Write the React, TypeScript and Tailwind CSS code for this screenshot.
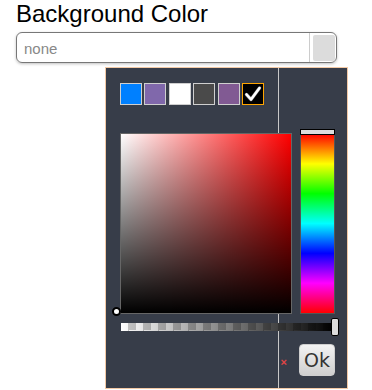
import React from 'react'

const swatches = [
  { color: 'bg-[#0080ff]' },
  { color: 'bg-[#8068ab]' },
  { color: 'bg-white' },
  { color: 'bg-[#4a4a4a]' },
  { color: 'bg-[#815a93]' },
]

function Palette() {
  return (
    <div className="flex gap-[2px] pl-[14px] pt-[15px] h-[65px]">
      {swatches.map((s, i) => (
        <div key={i} className={`w-[22px] h-[22px] border border-[#cfcfcf] ${s.color} ${i > 1 ? 'ml-[0.5px]' : ''}`} />
      ))}
      <div className="w-[22px] h-[22px] border border-[#ffa500] bg-black flex items-center justify-center">
        <svg width="18" height="18" viewBox="0 0 18 18">
          <path d="M2.5 9.5 L7 14.5 L15.5 3" fill="none" stroke="#ddd" strokeWidth="3.5" strokeLinecap="round" strokeLinejoin="round" opacity="0.5" />
          <path d="M2.5 9.5 L7 14.5 L15.5 3" fill="none" stroke="#fff" strokeWidth="2.6" strokeLinecap="round" strokeLinejoin="round" />
        </svg>
      </div>
    </div>
  )
}

function Picker() {
  return (
    <div className="pl-[14px]">
      <div className="flex gap-[8px]">
        <div className="relative w-[172px] h-[181px] border border-[#666] bg-[#f00] bg-[image:linear-gradient(to_top,#000,rgba(0,0,0,0)),linear-gradient(to_right,#fff,rgba(255,255,255,0))]">
          <div className="absolute left-[-9px] bottom-[-3px] w-[9px] h-[9px] rounded-full border-2 border-black bg-white" />
        </div>
        <div className="relative w-[35px] h-[181px] border border-[#555] bg-[image:linear-gradient(to_bottom,#f00,#ff0,#0f0,#0ff,#00f,#f0f,#f00)]">
          <div className="absolute left-[-1px] right-[-1px] top-[-5px] h-[6px] border border-black bg-[#dcdcdc]" />
        </div>
      </div>
      <div className="relative mt-[9px] ml-[1px] w-[212px] h-[8px] bg-[image:linear-gradient(to_right,rgba(0,0,0,0),#000),repeating-conic-gradient(#c8c8c8_0_25%,#fff_0_50%)] bg-[length:100%_100%,15px_15px]">
        <div className="absolute right-[-6px] top-[-5px] w-[8px] h-[18px] rounded-[2px] border border-black bg-[#dcdcdc]" />
      </div>
      <div className="flex items-center justify-end gap-[12px] mt-[13px] w-[215px]">
        <span className="text-[#e04545] text-[11px] font-bold leading-none pt-[4px]">×</span>
        <button className="w-[36px] h-[32px] rounded-[4px] border border-[#cfcfcf] bg-[image:linear-gradient(to_bottom,#f3f3f3,#cfcfcf)] text-[#333] text-[19px] leading-none font-['DejaVu_Sans',sans-serif]">
          Ok
        </button>
      </div>
    </div>
  )
}

export default function App() {
  return (
    <div className="w-[372px] h-[390px] overflow-hidden bg-white pl-[16px] font-['Liberation_Sans',Arial,sans-serif]">
      <div className="text-[24px] leading-[28px] text-black">Background Color</div>
      <div className="mt-[4px] w-[321px] h-[31px] rounded-[6px] border border-[#777] shadow-[0_1px_3px_rgba(0,0,0,0.25)] flex items-center pl-[7px] pr-[1px]">
        <span className="flex-1 text-[15px] text-[#888] pt-[3px]">none</span>
        <div className="h-full border-l border-[#ccc] flex items-center pl-[3px]">
          <div className="w-[22px] h-[26px] rounded-[2px] bg-[#dcdcdc]" />
        </div>
      </div>
      <div className="relative mt-[4px] ml-[89px] w-[243px] h-[322px] border border-[#f3c9a5] bg-[#373d49]">
        <div className="absolute left-[172px] top-0 bottom-0 w-px bg-[#c8c8c8]" />
        <div className="relative">
          <Palette />
          <Picker />
        </div>
      </div>
    </div>
  )
}
